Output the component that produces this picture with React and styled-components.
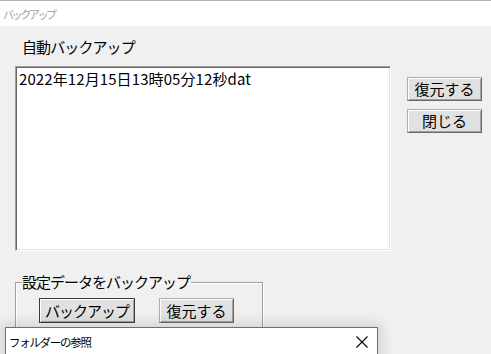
import React from "react";
import styled, { createGlobalStyle } from "styled-components";

const Global = createGlobalStyle`
  html, body { margin: 0; padding: 0; overflow: hidden; }
  body { width: 491px; height: 354px; background: #f0f0f0; font-family: "Noto Sans CJK JP", "Noto Sans", sans-serif; }
`;

const Window = styled.div`
  position: relative;
  width: 491px;
  height: 354px;
  display: flex;
  flex-direction: column;
  background: #f0f0f0;
  border-top: 1px solid #b4b4b4;
  box-sizing: border-box;
  overflow: hidden;
`;

const TitleBar = styled.div`
  height: 25px;
  background: #ffffff;
  display: flex;
  align-items: center;
  padding-left: 3px;
  font-size: 11px;
  color: #a0a0a0;
  letter-spacing: -2.4px;
  flex-shrink: 0;
`;

const Body = styled.div`
  flex: 1;
  display: flex;
  flex-direction: column;
  padding: 11px 0 0 15px;
`;

const TopRow = styled.div`
  display: flex;
  align-items: flex-start;
`;

const LeftCol = styled.div`
  display: flex;
  flex-direction: column;
`;

const Label = styled.div`
  font-size: 15px;
  line-height: 20px;
  height: 20px;
  padding-left: 7px;
  color: #000;
  margin-bottom: 9px;
  letter-spacing: -0.9px;
`;

const ListBox = styled.div`
  width: 376px;
  height: 185px;
  box-sizing: border-box;
  background: #fff;
  border-top: 1px solid #a0a0a0;
  border-left: 1px solid #a0a0a0;
  border-right: 1px solid #fff;
  border-bottom: 1px solid #fff;
  box-shadow: inset 1px 1px 0 #696969, inset -1px -1px 0 #e3e3e3;
  padding: 3px 0 0 3px;
`;

const ListItem = styled.div`
  font-size: 15px;
  line-height: 17px;
  color: #000;
  letter-spacing: 0.1px;
  white-space: nowrap;
`;

const RightCol = styled.div`
  display: flex;
  flex-direction: column;
  gap: 8px;
  margin-left: 16px;
  margin-top: 40px;
`;

const Button = styled.button`
  width: ${(p) => p.$w}px;
  height: ${(p) => p.$h || 24}px;
  box-sizing: border-box;
  background: #e1e1e1;
  border: 1px solid ${(p) => (p.$default ? "#3c3c3c" : "#adadad")};
  border-right-color: ${(p) => (p.$default ? "#3c3c3c" : "#696969")};
  border-bottom-color: ${(p) => (p.$default ? "#3c3c3c" : "#696969")};
  box-shadow: inset 1px 1px 0 #fff, inset -1px -1px 0 #a0a0a0;
  font-family: "Noto Sans CJK JP", sans-serif;
  font-size: 15px;
  line-height: 18px;
  letter-spacing: ${(p) => p.$ls ?? 0}px;
  color: #000;
  padding: 0;
  margin: 0;
  display: flex;
  align-items: center;
  justify-content: center;
`;

const GroupBox = styled.fieldset`
  margin: 22px 0 0 0;
  width: 248px;
  height: 80px;
  box-sizing: border-box;
  border: none;
  border-top: 1px solid #a0a0a0;
  border-left: 1px solid #a0a0a0;
  border-right: 1px solid #a0a0a0;
  box-shadow: inset 1px 1px 0 #fff, 1px 0 0 #fff;
  padding: 7px 0 0 6px;
`;

const Legend = styled.legend`
  font-size: 15px;
  line-height: 18px;
  padding: 0 1px 0 0;
  margin-left: 0;
  color: #000;
  letter-spacing: -1px;
`;

const GroupRow = styled.div`
  display: flex;
  gap: 24px;
  margin-left: 17px;
`;

const Dialog = styled.div`
  position: absolute;
  left: 5px;
  top: 326px;
  width: 373px;
  height: 60px;
  box-sizing: border-box;
  background: #fff;
  border: 1px solid #6e6e6e;
  box-shadow: 0 0 12px 4px rgba(0, 0, 0, 0.12);
`;

const DialogTitle = styled.div`
  height: 27px;
  display: flex;
  align-items: center;
  justify-content: space-between;
  padding-left: 3px;
  padding-right: 8px;
  font-size: 11.5px;
  color: #000;
  letter-spacing: -1.3px;
`;

const Close = styled.svg`
  width: 14px;
  height: 14px;
`;

export default function App() {
  return (
    <>
      <Global />
      <Window>
        <TitleBar>バックアップ</TitleBar>
        <Body>
          <TopRow>
            <LeftCol>
              <Label>自動バックアップ</Label>
              <ListBox>
                <ListItem>2022年12月15日13時05分12秒dat</ListItem>
              </ListBox>
            </LeftCol>
            <RightCol>
              <Button $w={75} $h={24}>復元する</Button>
              <Button $w={75} $h={24}>閉じる</Button>
            </RightCol>
          </TopRow>
          <GroupBox>
            <Legend>設定データをバックアップ</Legend>
            <GroupRow>
              <Button $w={96} $h={25} $ls={-1} $default>バックアップ</Button>
              <Button $w={75} $h={25}>復元する</Button>
            </GroupRow>
          </GroupBox>
        </Body>
        <Dialog>
          <DialogTitle>
            <span>フォルダーの参照</span>
            <Close viewBox="0 0 14 14">
              <path d="M1.5 1.5 L12.5 12.5 M12.5 1.5 L1.5 12.5" stroke="#000" strokeWidth="1.1" fill="none" />
            </Close>
          </DialogTitle>
        </Dialog>
      </Window>
    </>
  );
}
